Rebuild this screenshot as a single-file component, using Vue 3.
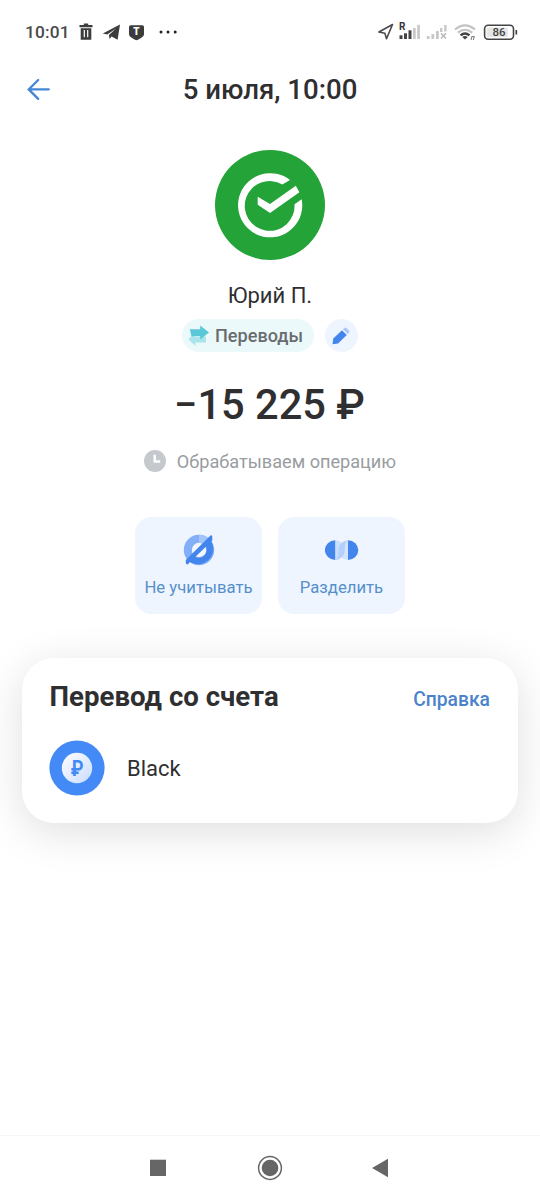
<script setup>
const actions = [
  { id: 'exclude', label: 'Не учитывать' },
  { id: 'split', label: 'Разделить' },
]
</script>

<template>
  <main class="screen">
    <div class="statusbar">
      <span class="time">10:01</span>
      <svg class="left-icons" width="102" height="20" viewBox="0 0 102 20">
        <g fill="#3c3c3c">
          <path d="M0.5 3h4.300v-1.600h4.400V3h4.300v2.200h-13z" />
          <path fill-rule="evenodd" d="M1.700 6.200h10.600V17.800H1.700zM4.700 8v7.300h1.200V8zM8.100 8v7.300h1.200V8z" />
          <path d="M23.800 11.400L41 2.600 38.600 17.800 32.600 14.400 30.600 17 29.900 12.900 37 6.500 28.300 12.400z" />
          <path d="M50 4.800q0-1.600 1.600-1.600h11.800q1.600 0 1.600 1.600v7.400c0 2.200-3.600 4.500-7.500 6.100-3.900-1.600-7.500-3.900-7.500-6.100z" />
        </g>
        <text x="57.500" y="13.400" text-anchor="middle" class="shield-letter">T</text>
        <g fill="#222"><circle cx="82" cy="10" r="1.500" /><circle cx="89" cy="10" r="1.500" /><circle cx="96.200" cy="10" r="1.500" /></g>
      </svg>
      <svg class="right-icons" width="142" height="24" viewBox="0 0 142 24">
        <path d="M0.900 12L14.500 4.500 8.500 18.700 6.900 13.300z" fill="none" stroke="#4a4a4a" stroke-width="1.600" stroke-linejoin="round" />
        <text x="21" y="10" class="roaming">R</text>
        <g fill="#444"><rect x="21.500" y="15.300" width="3" height="3.700" /><rect x="26" y="13.300" width="3" height="5.700" /><rect x="30.500" y="10.300" width="3" height="8.700" /></g>
        <g fill="#c8c8c8"><rect x="35" y="8" width="2.700" height="11" /><rect x="39.200" y="4.800" width="2.700" height="14.200" />
          <rect x="48.800" y="16" width="2.800" height="3" /><rect x="53.400" y="14" width="2.800" height="5" /><rect x="58" y="11" width="2.800" height="8" /><rect x="62" y="8" width="2.400" height="4" /><rect x="66.200" y="5" width="2.400" height="6.500" /></g>
        <path d="M63 13.300l5 5.200m0-5.200l-5 5.200" stroke="#b8b8b8" stroke-width="1.500" />
        <g fill="none" stroke-width="2.100">
          <path d="M77 9.500Q87 1.300 97 9.500M79.800 12.600Q87 6.900 94.200 12.600" stroke="#c2c2c2" />
          <path d="M82.500 15.300Q87 11.500 91.500 15.300" stroke="#444" stroke-width="2.400" />
        </g>
        <path d="M84.200 16.900Q87 15.100 89.800 16.900L87 19.600z" fill="#444" />
        <path d="M93 20l1-3.500m1.300 3.500l1-3.500m-2.700 0h2.700" stroke="#777" stroke-width="1" fill="none" />
        <rect x="108.800" y="7.500" width="21" height="9.500" rx="1.500" fill="#e6e6e6" />
        <rect x="106.600" y="5.200" width="28.900" height="14" rx="3.500" fill="none" stroke="#444" stroke-width="1.600" />
        <path d="M138.300 10v4.500" stroke="#444" stroke-width="1.700" />
        <text x="121" y="16.300" text-anchor="middle" class="battery">86</text>
      </svg>
    </div>

    <header class="header">
      <svg class="back" width="24" height="24" viewBox="0 0 24 24">
        <path d="M22.700 11.400H3M12.200 2L2.700 11.400 12.200 20.900" fill="none" stroke="#4687d6" stroke-width="2.300" stroke-linecap="round" stroke-linejoin="miter" />
      </svg>
      <h1>5 июля, 10:00</h1>
    </header>

    <section class="summary">
      <svg class="avatar" width="110" height="110" viewBox="0 0 110 110">
        <circle cx="55" cy="55" r="55" fill="#24a338" />
        <path d="M75 30A32.100 32.100 0 1 0 86.700 49.200L79.500 54.300A24.900 24.900 0 1 1 67.300 34.500z" fill="#fff" />
        <path d="M42.700 46.700L55 54 80.800 35.700 84.400 42.300 55 63 42.700 54.800z" fill="#fff" />
      </svg>
      <p class="name">Юрий П.</p>
      <div class="tags">
        <span class="chip">
          <svg width="21" height="22" viewBox="0 0 21 22">
            <path d="M0.300 14.200L7.500 8v3.500H18v6H7.500V21z" fill="#a9e5eb" />
            <path d="M1.800 4.300H12.200V0.600L21 7.600 12.200 14.500V11H6.200L3.500 11.500z" fill="#5bc8d7" />
          </svg>
          <span>Переводы</span>
        </span>
        <span class="edit">
          <svg width="18" height="18" viewBox="0 0 18 18">
            <path d="M0.500 17.200L1.300 11.500 10 3.200l4.800 4.800-8.700 8.500z" fill="#4285ed" />
            <path d="M11 2.200L12.300.9q1.200-.8 2.400.3l2.100 2.100q1 1.100.2 2.400l-1.300 1.300z" fill="#a9c8fa" />
          </svg>
        </span>
      </div>
      <p class="amount">−15 225 ₽</p>
      <p class="state">
        <svg width="22" height="22" viewBox="0 0 22 22">
          <circle cx="11" cy="11" r="11" fill="#c5c9cd" />
          <path d="M10.700 4.800v6.700h5.500" fill="none" stroke="#fff" stroke-width="2.400" />
        </svg>
        <span>Обрабатываем операцию</span>
      </p>
    </section>

    <div class="actions">
      <button v-for="a in actions" :key="a.id" type="button">
        <svg v-if="a.id === 'exclude'" width="34" height="34" viewBox="0 0 34 34">
          <circle cx="17" cy="17" r="7.500" fill="#f3f8ff" />
          <circle cx="17" cy="17" r="11.200" fill="none" stroke="#82aff7" stroke-width="8" />
          <path d="M17 5.800A11.200 11.200 0 0 1 25.800 10" fill="none" stroke="#a3c4fa" stroke-width="8" />
          <path d="M27.700 6.300A15.200 15.200 0 0 1 6.300 27.700L10.500 21.500 12 23.200A8 8 0 0 0 23.200 12L21.500 10.500z" fill="#4285ed" />
          <path d="M3.800 27L28.500 2.600Q30 1.800 30.300 3.500V7.500L7.500 29.500 5.700 31.400Q4.200 31.800 3.800 30z" fill="#4285ed" />
        </svg>
        <svg v-else width="34" height="34" viewBox="0 0 34 34">
          <path d="M10.200 7.300A10 9.800 0 0 1 10.200 26.900z" fill="#cbdefc" />
          <path d="M23 7.300A10 9.800 0 0 0 23 26.900z" fill="#d5e4fd" />
          <path d="M11 26.900Q14 24.500 13.500 17Q13.500 9.500 22.500 7.300Q19.500 9.700 19.800 17Q19.800 25 11 26.900z" fill="#b3cffb" />
          <path d="M10.200 7.300A10.300 9.800 0 0 0 10.200 26.900z" fill="#4285ed" />
          <path d="M23 7.300A10.300 9.800 0 0 1 23 26.900z" fill="#4285ed" />
        </svg>
        <span>{{ a.label }}</span>
      </button>
    </div>

    <section class="card">
      <div class="card-head">
        <h2>Перевод со счета</h2>
        <a>Справка</a>
      </div>
      <div class="account">
        <svg width="56" height="56" viewBox="0 0 56 56">
          <defs>
            <linearGradient id="coin" x1="0" y1="0" x2="1" y2="1">
              <stop offset="0" stop-color="#fff" /><stop offset="1" stop-color="#c8dcff" />
            </linearGradient>
          </defs>
          <circle cx="28" cy="28" r="27.600" fill="#448af7" />
          <circle cx="28" cy="28" r="15.200" fill="url(#coin)" />
          <text transform="translate(28 35.600) scale(0.84 1)" text-anchor="middle" class="coin">₽</text>
        </svg>
        <span>Black</span>
      </div>
    </section>

    <nav class="navbar">
      <svg width="270" height="30" viewBox="0 0 270 30">
        <rect x="15" y="6.700" width="16" height="16.300" fill="#666" />
        <circle cx="135" cy="15" r="11.400" fill="none" stroke="#666" stroke-width="1.500" />
        <circle cx="135" cy="15" r="8.300" fill="#666" />
        <path d="M237 15L253 5.700V24.300z" fill="#666" />
      </svg>
    </nav>
  </main>
</template>

<style>
body { margin: 0; background: #fff; }
</style>

<style scoped>
.screen {
  width: 540px;
  height: 1200px;
  display: flex;
  flex-direction: column;
  align-items: center;
  overflow: hidden;
  background: #fff;
  color: #2f2f31;
  font-family: Roboto, "Noto Sans", sans-serif;
}
h1, h2, p { margin: 0; }
svg { display: block; flex: none; }
span, p, h1, h2, a { white-space: nowrap; }
.statusbar {
  align-self: stretch;
  display: flex;
  align-items: center;
  height: 64px;
  padding: 0 20px 0 25px;
  box-sizing: border-box;
}
.time { width: 54px; font-size: 17.300px; font-weight: 500; letter-spacing: 0.2px; color: #4a4a4a; }
.right-icons { margin-left: auto; }
.shield-letter { font-size: 10px; font-weight: 900; fill: #fff; }
.roaming { font-size: 10px; font-weight: 700; fill: #333; }
.battery { font-size: 11.500px; font-weight: 500; fill: #444; }
.header {
  align-self: stretch;
  display: grid;
  grid-template-columns: 100px 1fr 100px;
  align-items: center;
  height: 52px;
}
.back { margin-left: 26px; }
h1 { text-align: center; font-size: 27.600px; line-height: 32px; font-weight: 500; }
.summary { display: flex; flex-direction: column; align-items: center; }
.avatar { margin-top: 34px; }
.name { margin-top: 22px; font-size: 22px; line-height: 28px; }
.tags { display: flex; gap: 11px; margin-top: 9px; }
.chip {
  display: flex;
  align-items: center;
  gap: 6px;
  width: 132px;
  height: 33px;
  padding-left: 6px;
  box-sizing: border-box;
  border-radius: 17px;
  background: #ebf9fb;
  color: #696c6f;
  font-size: 18.100px;
  font-weight: 500;
}
.edit { display: grid; place-items: center; width: 33px; height: 33px; border-radius: 50%; background: #eff5fe; }
.amount { margin-top: 28px; padding-right: 1px; font-size: 41.600px; line-height: 50px; font-weight: 500; }
.state { display: flex; align-items: center; gap: 11px; margin-top: 19px; height: 24px; font-size: 18.150px; color: #999c9f; }
.actions { display: flex; gap: 16px; margin-top: 44px; }
.actions button {
  display: flex;
  flex-direction: column;
  align-items: center;
  width: 127px;
  height: 97px;
  padding: 16px 0 0;
  border: 0;
  border-radius: 16px;
  background: #eff5fe;
  font: 400 16.700px/22px Roboto, sans-serif;
  color: #5590cc;
}
.actions span { margin-top: 10px; }
.card {
  width: 496px;
  height: 165px;
  margin-top: 44px;
  padding: 22px 28px 0 27px;
  box-sizing: border-box;
  border-radius: 32px;
  background: #fff;
  box-shadow: 0 9px 44px rgba(0, 0, 0, 0.13);
}
.card-head { display: flex; justify-content: space-between; align-items: center; height: 34px; }
h2 { padding-left: 0.600px; font-size: 27.600px; line-height: 34px; font-weight: 700; }
.card-head a { margin-top: 5px; font-size: 19.300px; font-weight: 500; color: #4b83cb; }
.account { display: flex; align-items: center; gap: 22px; margin-top: 26px; font-size: 22px; }
.coin { font-size: 21.500px; font-weight: 700; fill: #448af7; }
.navbar {
  align-self: stretch;
  display: flex;
  justify-content: center;
  height: 65px;
  padding-top: 17px;
  box-sizing: border-box;
  margin-top: auto;
  border-top: 1px solid #f7f7f7;
}
</style>
